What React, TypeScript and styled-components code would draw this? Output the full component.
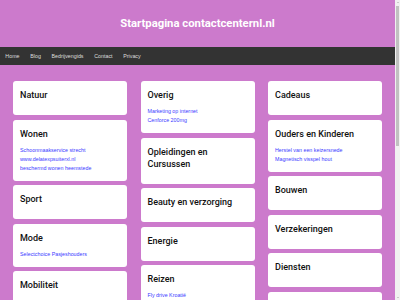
import React from "react";
import styled, { createGlobalStyle } from "styled-components";

const GlobalStyle = createGlobalStyle`
  html, body {
    margin: 0;
    height: 100%;
    overflow: hidden;
    background: #cc7acc;
  }
  body {
    font-family: "Liberation Sans", Arial, sans-serif;
  }
`;

const Frame = styled.div`
  display: flex;
  height: 100vh;
  overflow: hidden;
`;

const Page = styled.div`
  flex: 1;
  min-width: 0;
  overflow: hidden;
  background: #cc7acc;
`;

const ScrollTrack = styled.div`
  width: 5px;
  flex: none;
  display: flex;
  flex-direction: column;
  align-items: center;
  background: #f1f1f1;
`;

const ArrowUp = styled.div`
  margin: 2px 0 2px;
  width: 0;
  height: 0;
  border-left: 1.5px solid transparent;
  border-right: 1.5px solid transparent;
  border-bottom: 1.5px solid #a3a3a3;
`;

const ArrowDown = styled.div`
  margin: auto 0 2px;
  width: 0;
  height: 0;
  border-left: 1.5px solid transparent;
  border-right: 1.5px solid transparent;
  border-top: 1.5px solid #a3a3a3;
`;

const Thumb = styled.div`
  width: 3px;
  height: 140px;
  margin-top: 1px;
  background: #c1c1c1;
`;

const Header = styled.header`
  height: 47px;
  display: flex;
  align-items: center;
  justify-content: center;
`;

const SiteTitle = styled.h1`
  margin: 0;
  font-family: Roboto, "Liberation Sans", sans-serif;
  font-weight: 700;
  font-size: 11.3px;
  line-height: 14px;
  color: #ffffff;
`;

const Nav = styled.nav`
  height: 18px;
  display: flex;
  align-items: center;
  background: #333333;
`;

const NavLink = styled.a`
  padding: 0 5.33px;
  font-size: 5.33px;
  line-height: 18px;
  color: #dddddd;
  text-decoration: none;
`;

const Main = styled.main`
  display: grid;
  grid-template-columns: repeat(3, 1fr);
  column-gap: 13.5px;
  align-items: start;
  padding: 16px 13px 20px;
`;

const Column = styled.div`
  display: flex;
  flex-direction: column;
  gap: 4.5px;
`;

const Card = styled.section`
  background: #ffffff;
  border-radius: 3px;
  padding: 8px 7px;
`;

const CardTitle = styled.h2`
  margin: 0 0 6px;
  font-family: Roboto, "Liberation Sans", sans-serif;
  font-weight: 500;
  font-size: 9px;
  line-height: 12px;
  color: #111111;
`;

const LinkList = styled.ul`
  list-style: none;
  margin: 0;
  padding: 0;
  font-size: 5.33px;
`;

const LinkItem = styled.li`
  font-size: 5.33px;
  line-height: 9px;
`;

const CardLink = styled.a`
  font-size: 5.33px;
  color: #3b3bff;
  text-decoration: none;
`;

type CardData = { title: string; links: string[] };

const columns: CardData[][] = [
  [
    { title: "Natuur", links: [] },
    {
      title: "Wonen",
      links: [
        "Schoonmaakservice strecht",
        "www.delatexpsuiterxl.nl",
        "beschermd wonen heemstede",
      ],
    },
    { title: "Sport", links: [] },
    { title: "Mode", links: ["Selectchoice Pasjeshouders"] },
    { title: "Mobiliteit", links: [] },
    { title: "Financieel", links: [] },
  ],
  [
    { title: "Overig", links: ["Marketing op internet", "Cenforce 200mg"] },
    { title: "Opleidingen en Cursussen", links: [] },
    { title: "Beauty en verzorging", links: [] },
    { title: "Energie", links: [] },
    { title: "Reizen", links: ["Fly drive Kroatië"] },
    { title: "Computers", links: [] },
  ],
  [
    { title: "Cadeaus", links: [] },
    {
      title: "Ouders en Kinderen",
      links: ["Herstel van een keizersnede", "Magnetisch visspel hout"],
    },
    { title: "Bouwen", links: [] },
    { title: "Verzekeringen", links: [] },
    { title: "Diensten", links: [] },
    { title: "Gezondheid", links: [] },
    { title: "Hobby", links: [] },
  ],
];

const navItems = ["Home", "Blog", "Bedrijvengids", "Contact", "Privacy"];

export default function App() {
  return (
    <>
      <GlobalStyle />
      <Frame>
        <Page>
          <Header>
            <SiteTitle>Startpagina contactcenternl.nl</SiteTitle>
          </Header>
          <Nav>
            {navItems.map((item) => (
              <NavLink key={item} href="#">
                {item}
              </NavLink>
            ))}
          </Nav>
          <Main>
            {columns.map((col, i) => (
              <Column key={i}>
                {col.map((card) => (
                  <Card key={card.title}>
                    <CardTitle>{card.title}</CardTitle>
                    {card.links.length > 0 && (
                      <LinkList>
                        {card.links.map((l) => (
                          <LinkItem key={l}>
                            <CardLink href="#">{l}</CardLink>
                          </LinkItem>
                        ))}
                      </LinkList>
                    )}
                  </Card>
                ))}
              </Column>
            ))}
          </Main>
        </Page>
        <ScrollTrack aria-hidden="true">
          <ArrowUp />
          <Thumb />
          <ArrowDown />
        </ScrollTrack>
      </Frame>
    </>
  );
}
